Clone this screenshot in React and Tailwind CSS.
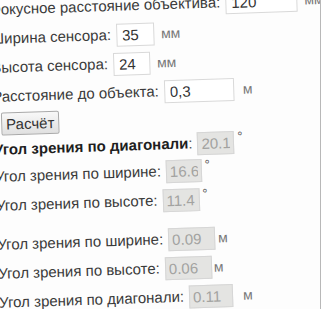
import React from "react";

const Field = ({ label, value, unit, width, readOnly, bold, rowH = "h-[29px]", unitGap = "ml-[7px]" }) => (
    <div className={`flex ${rowH} items-center whitespace-nowrap`}>
        <span className={bold ? "font-bold text-[#1e1e1e]" : ""}>{label}</span>
        <span className={bold ? "text-[#555]" : ""}>:</span>
        <input
            readOnly
            value={value}
            className={`ml-[5px] h-[23px] border text-[15px] outline-none ${width} ${
                readOnly
                    ? "border-[#d6d6d6] bg-[#e4e4e2] px-[3px] text-[#a2a2a0]"
                    : "border-[#d9d9d9] bg-white px-[5px] text-[#333]"
            }`}
        />
        {unit === "°" ? (
            <span className="ml-[3px] -mt-[11px] text-[13px] text-[#555]">°</span>
        ) : (
            <span className={`${unitGap} text-[14px] text-[#777]`}>{unit}</span>
        )}
    </div>
);

const App = () => {
    return (
        <div className="h-[309px] w-[322px] overflow-hidden bg-white">
            <div className="h-[309px] w-[321px] overflow-hidden border-r border-[#b8b8b8] bg-[#fdfdfd]">
                <div className="-ml-[11px] -mt-[4px] w-[340px] origin-top-left -rotate-[1.9deg] font-['Liberation_Sans',Arial,sans-serif] text-[15px] text-[#3a3a3a]">
                    <Field label="Фокусное расстояние объектива" value="120" unit="мм" width="w-[72px]" />
                    <Field label="Ширина сенсора" value="35" unit="мм" width="w-[38px]" />
                    <Field label="Высота сенсора" value="24" unit="мм" width="w-[37px]" />
                    <Field label="Расстояние до объекта" value="0,3" unit="м" width="w-[70px]" unitGap="ml-[9px]" />
                    <div className="flex h-[25px] items-center">
                        <button className="ml-[8px] h-[23px] w-[58px] rounded-[2px] border border-[#a9a9a9] bg-gradient-to-b from-[#f8f8f8] to-[#e0e0e0] text-[15px] text-[#333]">
                            Расчёт
                        </button>
                    </div>
                    <Field label="Угол зрения по диагонали" value="20.1" unit="°" width="w-[37px]" rowH="h-[26px]" readOnly bold />
                    <Field label="Угол зрения по ширине" value="16.6" unit="°" width="w-[36px]" readOnly />
                    <Field label="Угол зрения по высоте" value="11.4" unit="°" width="w-[37px]" readOnly />
                    <div className="mt-[10px]">
                        <Field label="Угол зрения по ширине" value="0.09" unit="м" width="w-[47px]" readOnly unitGap="ml-[3px]" />
                        <Field label="Угол зрения по высоте" value="0.06" unit="м" width="w-[47px]" readOnly unitGap="ml-[2px]" />
                        <Field label="Угол зрения по диагонали" value="0.11" unit="м" width="w-[44px]" readOnly unitGap="ml-[10px]" />
                    </div>
                </div>
            </div>
        </div>
    );
};

export default App;
